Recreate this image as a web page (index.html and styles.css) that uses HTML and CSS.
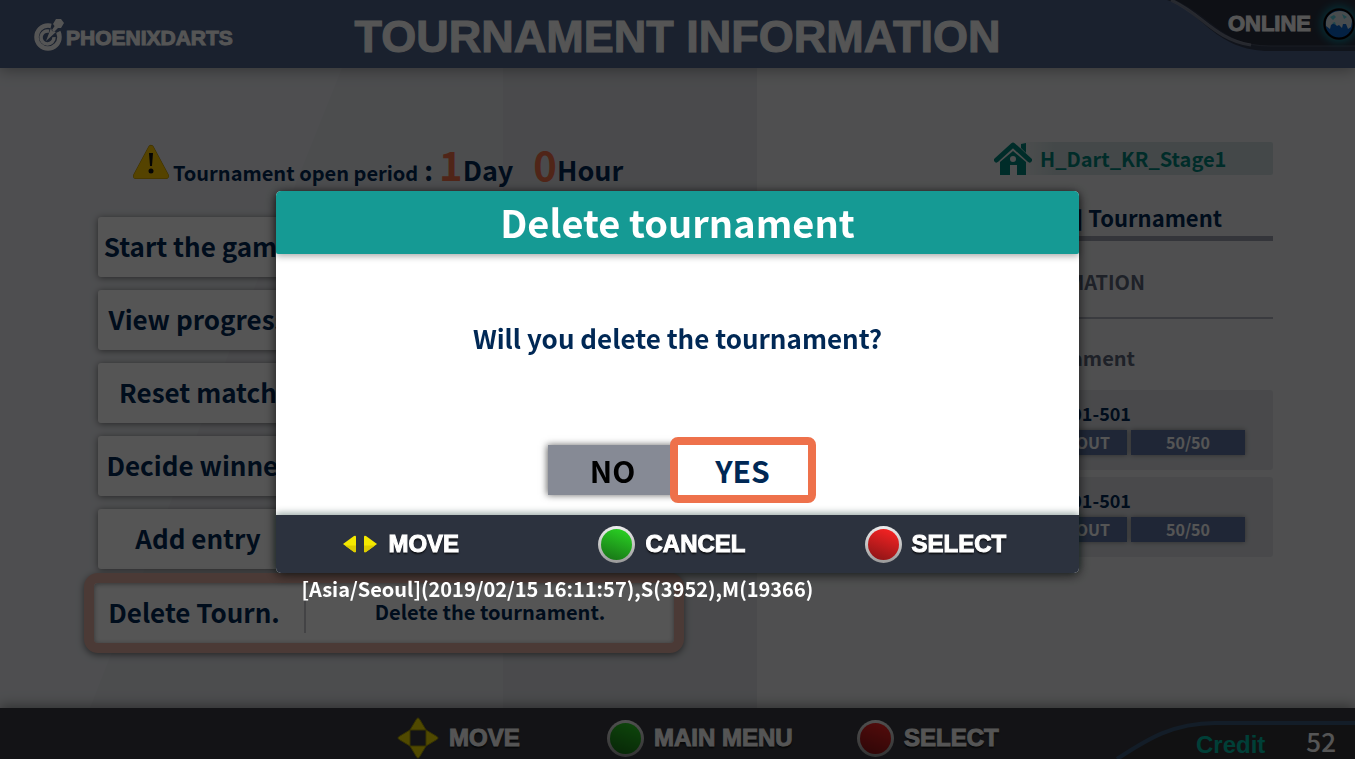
FILE: index.html
```html
<!DOCTYPE html>
<html lang="en">
<head>
  <meta charset="UTF-8" />
  <meta name="viewport" content="width=device-width, initial-scale=1.0" />
  <title>Tournament Information</title>
  <link rel="stylesheet" href="styles.css">
</head>
<body>

  <header class="top-bar">
    <div class="logo">
      <svg width="30" height="34" viewBox="0 0 30 34">
        <circle cx="14" cy="19" r="11.500" fill="none" stroke="#fff" stroke-width="4.500"/>
        <path d="M15 13.200a6.500 6.500 0 1 0 5 6" fill="none" stroke="#fff" stroke-width="3.500"/>
        <path d="M15 17L18 4h10l-2 9-6 3-4 4z" fill="#4e638a"/>
        <path d="M12 23l5-13 1 3 4 1z" fill="#fff"/>
        <path d="M18 12l4-6 3 3-5 5z" fill="#fff"/>
        <path d="M22 1h5l3 4-3 5h-5l-3-4z" fill="#fff"/>
      </svg>
      <span>PHOENIXDARTS</span>
    </div>
    <h1>TOURNAMENT INFORMATION</h1>
    <div class="online">
      <svg class="online-bg" width="190" height="54" viewBox="0 0 190 54">
        <path d="M2 0C38 12 50 51 105 51H190V0z" fill="#333c52"/>
        <path d="M10 0C48 17 58 46 105 46H190V0z" fill="#2b3040"/>
        <path d="M6 0C42 14 54 46 105 46H190" fill="none" stroke="#4c5468" stroke-width="1"/>
        <path d="M6 0C36 13 50 40 86 45" fill="none" stroke="#8f94a3" stroke-width="3" opacity=".7"/>
      </svg>
      <span>ONLINE</span>
      <svg class="globe" width="32" height="32" viewBox="0 0 32 32">
        <circle cx="16" cy="16" r="14.500" fill="#0a63c8" stroke="#000" stroke-width="2"/>
        <path d="M3 14C4 7 10 3 17 3c6 0 11 4 12 10l-1 6-3 2-2-5-3 0-1 4-3-3-2 1-3-3-3 2-1 4-4-3z" fill="#d9e4ea"/>
        <path d="M7 9l4-2 2 2-3 3zM19 6l5 3-3 2zM9 15l3-1 1 3z" fill="#5ad0e0"/>
      </svg>
    </div>
  </header>

  <main>
    <section class="left">
      <svg class="facets" viewBox="0 0 757 640" preserveAspectRatio="none">
        <path d="M0 0H160L205 160 270 420 0 330z" fill="#fff" opacity=".03"/>
        <path d="M342 0H503V640H90L270 180z" fill="#5d5d50" opacity=".03"/>
        <path d="M503 0H757V640H503z" fill="#555" opacity=".08"/>
      </svg>
      <p class="period">
        <svg width="40" height="38" viewBox="0 0 40 38">
          <path d="M20 5L35 33H5z" fill="#ffc800" stroke="#b08a00" stroke-width="6" stroke-linejoin="round"/>
          <path d="M20 5L35 33H5z" fill="#ffc800" stroke="#ffc800" stroke-width="5" stroke-linejoin="round"/>
          <path d="M18 10h4l-1 13h-2z" fill="#111"/>
          <circle cx="20" cy="28" r="2.500" fill="#111"/>
        </svg>
        <span class="period-label">Tournament open period</span>
        <span class="unit colon">:</span>
        <span class="num">1</span><span class="unit">Day</span>
        <span class="num hours">0</span><span class="unit">Hour</span>
      </p>
      <nav class="menu">
        <button><span>Start the game</span></button>
        <button><span>View progress</span></button>
        <button><span>Reset match</span></button>
        <button><span>Decide winner</span></button>
        <button><span>Add entry</span></button>
        <button class="selected"><span>Delete Tourn.</span><small>Delete the tournament.</small></button>
      </nav>
    </section>

    <section class="right">
      <div class="shop">
        <svg width="38" height="33" viewBox="0 0 38 33">
          <path d="M2.500 18L19 3l16.500 15" fill="none" stroke="#00857c" stroke-width="5" stroke-linecap="round" stroke-linejoin="round"/>
          <path d="M27 2l5-1v10l-5-5z" fill="#00857c"/>
          <path fill-rule="evenodd" d="M19 9L32 20v13h-9V23h-7v10H6V20zM19 14a3 3 0 1 0 0 6 3 3 0 0 0 0-6z" fill="#00857c"/>
        </svg>
        <span>H_Dart_KR_Stage1</span>
      </div>
      <h2>] Tournament</h2>
      <h3>INFORMATION</h3>
      <p class="kind">Tournament</p>
      <div class="game">
        <p>501-501</p>
        <div class="tags"><span class="out">OUT</span><span class="count">50/50</span></div>
      </div>
      <div class="game">
        <p>501-501</p>
        <div class="tags"><span class="out">OUT</span><span class="count">50/50</span></div>
      </div>
    </section>
  </main>

  <footer class="bottom-bar">
    <div class="keys">
      <div class="key">
        <svg width="42" height="42" viewBox="0 0 42 42">
          <g fill="#f0dc00" stroke="#a89b00" stroke-width="1" stroke-linejoin="round">
            <path d="M21 1q1 0 2 2l6 10H13l6-10q1-2 2-2z"/>
            <path d="M21 41q1 0 2-2l6-10H13l6 10q1 2 2 2z"/>
            <path d="M1 21q0-1 2-2l10-6v16L3 23q-2-1-2-2z"/>
            <path d="M41 21q0-1-2-2l-10-6v16l10-6q2-1 2-2z"/>
          </g>
        </svg>
        <span>MOVE</span>
      </div>
      <div class="key"><i class="lamp green"></i><span>MAIN MENU</span></div>
      <div class="key"><i class="lamp red"></i><span>SELECT</span></div>
    </div>
    <div class="credit">
      <svg class="credit-bg" width="240" height="38" viewBox="0 0 240 38">
        <path d="M2 38C30 20 56 2 100 2H240V38z" fill="#333438"/>
        <path d="M2 38C30 20 56 2 100 2H240" fill="none" stroke="#3a5878" stroke-width="4"/>
      </svg>
      <span>Credit</span>
      <b>52</b>
    </div>
  </footer>

  <div class="overlay">
    <div class="dialog" role="dialog" aria-labelledby="dialog-title">
      <h2 id="dialog-title">Delete tournament</h2>
      <div class="dialog-body">
        <p>Will you delete the tournament?</p>
        <div class="answers">
          <button class="no">NO</button>
          <button class="yes">YES</button>
        </div>
      </div>
      <div class="dialog-keys">
        <div class="key">
          <svg width="36" height="20" viewBox="0 0 36 20">
            <path d="M1 10L12 2q2-1 2 1v14q0 2-2 1z" fill="#f4e800"/>
            <path d="M35 10L24 2q-2-1-2 1v14q0 2 2 1z" fill="#f4e800"/>
            <path d="M3 11.500h11V17q0 2-2 1zM33 11.500H22V17q0 2 2 1z" fill="#dccb00"/>
          </svg>
          <span>MOVE</span>
        </div>
        <div class="key"><i class="lamp green"></i><span>CANCEL</span></div>
        <div class="key"><i class="lamp red"></i><span>SELECT</span></div>
      </div>
      <div class="stamp">[Asia/Seoul](2019/02/15 16:11:57),S(3952),M(19366)</div>
    </div>
  </div>

</body>
</html>
```

FILE: styles.css
```css
* {
  box-sizing: border-box;
}
html, body {
  margin: 0;
  height: 100%;
  overflow: hidden;
}
body {
  display: flex;
  flex-direction: column;
  background: #ebedf1;
  color: #002855;
  font-family: "Noto Sans CJK KR", "Noto Sans", sans-serif;
  font-weight: bold;
}
h1, h2, h3, p {
  margin: 0;
}
button {
  font: inherit;
  color: inherit;
  border: none;
  padding: 0;
  cursor: pointer;
}

/* top bar */
.top-bar {
  position: relative;
  z-index: 1;
  flex: none;
  display: flex;
  align-items: center;
  justify-content: center;
  height: 68px;
  background: #4e638a;
  box-shadow: 0 2px 14px rgba(0,0,0,0.35);
  color: #fff;
  font-family: "Liberation Sans", Arial, sans-serif;
}
.logo {
  position: absolute;
  left: 34px;
  top: 18px;
  display: flex;
  align-items: center;
  gap: 2px;
  font-size: 21px;
}
.logo span {
  padding-top: 6px;
  -webkit-text-stroke: 1px #fff;
}
h1 {
  padding-top: 6px;
  font-size: 45px;
  line-height: 52px;
  -webkit-text-stroke: 1px #fff;
}
.online {
  position: absolute;
  right: 0;
  top: 0;
  display: flex;
  align-items: center;
  gap: 12px;
  height: 47px;
  font-size: 22px;
}
.online-bg {
  position: absolute;
  right: 0;
  top: 0;
  z-index: -1;
}
.globe {
  border-radius: 50%;
  box-shadow: 0 0 8px 2px #0f8ca0;
}

/* content */
main {
  flex: 1;
  display: grid;
  grid-template-columns: 757fr 598fr;
  min-height: 0;
}
.left {
  position: relative;
  padding: 66px 83px 0 98px;
  background: #e9ebf0;
}
.facets {
  position: absolute;
  inset: 0;
  width: 100%;
  height: 100%;
}
.period {
  position: relative;
  display: flex;
  align-items: baseline;
  height: 60px;
  padding-left: 33px;
  line-height: 60px;
  white-space: nowrap;
}
.period-label {
  padding-left: 2px;
  font-size: 20px;
}
.unit {
  font-size: 27px;
}
.colon {
  margin: 0 6px;
}
.num {
  color: #f0704a;
  font-size: 40px;
}
.hours {
  margin-left: 20px;
}
.menu {
  position: relative;
  display: flex;
  flex-direction: column;
  gap: 13px;
  margin-top: 23px;
}
.menu button {
  display: flex;
  align-items: center;
  height: 60px;
  border-radius: 3px;
  background: #fff;
  box-shadow: 0 1px 7px rgba(0,0,0,0.5);
  font-size: 26px;
}
.menu span {
  width: 200px;
  padding-bottom: 3px;
  text-align: center;
}
.menu .selected {
  height: 80px;
  margin: -9px -10px 0 -14px;
  border: 10px solid #e1aea2;
  border-radius: 14px;
  box-shadow: 0 2px 7px rgba(0,0,0,0.5), inset 0 1px 5px rgba(0,0,0,0.4);
}
.menu .selected span {
  margin-right: 10px;
}
.menu small {
  flex: 1;
  height: 40px;
  border-left: 2px solid #c8cad0;
  font-size: 20px;
  line-height: 38px;
  text-align: center;
}

.right {
  padding: 74px 82px 0 83px;
  background: #edeef0;
}
.shop {
  display: flex;
  align-items: center;
  gap: 8px;
  width: 279px;
  height: 33px;
  margin-left: auto;
  border-radius: 2px;
  background: linear-gradient(to right, transparent 20px, #ccd9db 60px);
  color: #00857c;
  font-size: 20px;
}
.right h2 {
  height: 66px;
  padding: 24px 51px 0 0;
  border-bottom: 5px solid #9b9fad;
  font-size: 22px;
  line-height: 36px;
  text-align: right;
}
.right h3 {
  height: 78px;
  padding: 24px 128px 0 0;
  border-bottom: 2px solid #adb1be;
  color: #5b6478;
  font-size: 20px;
  line-height: 34px;
  text-align: right;
}
.kind {
  height: 71px;
  padding: 22px 138px 0 0;
  color: #5b6478;
  font-size: 20px;
  line-height: 34px;
  text-align: right;
}
.game {
  height: 80px;
  margin-bottom: 7px;
  padding: 10px 28px 0 0;
  border-radius: 3px;
  background: #dadce1;
}
.game p {
  height: 30px;
  padding-right: 114px;
  font-size: 18px;
  line-height: 27px;
  text-align: right;
}
.tags {
  display: flex;
  justify-content: flex-end;
  gap: 4px;
  color: #fff;
  font-size: 16px;
  line-height: 25px;
}
.tags span {
  background: #5d74a2;
  box-shadow: 0 0 5px rgba(0,0,0,0.4);
}
.out {
  width: 115px;
  padding-right: 17px;
  text-align: right;
}
.count {
  width: 114px;
  text-align: center;
}

/* key hints */
.bottom-bar {
  position: relative;
  z-index: 1;
  flex: none;
  height: 51px;
  padding: 9px 0 0 397px;
  background: #393b43;
  box-shadow: 0 -2px 12px rgba(0,0,0,0.4);
}
.keys {
  display: grid;
  grid-template-columns: 210px 250px auto;
}
.key {
  display: flex;
  align-items: center;
  gap: 10px;
  height: 42px;
  color: #fff;
  font-family: "Liberation Sans", Arial, sans-serif;
  font-size: 24px;
  text-shadow: 0 2px 2px rgba(0,0,0,0.8);
}
.key span, .online span {
  -webkit-text-stroke: 1px #fff;
}
.lamp {
  width: 37px;
  height: 37px;
  border: 3px solid transparent;
  border-radius: 50%;
}
.green {
  background: linear-gradient(200deg, #2bd824, #176f16) padding-box, linear-gradient(#eee, #999) border-box;
}
.red {
  background: linear-gradient(200deg, #ff2424, #861416) padding-box, linear-gradient(#eee, #999) border-box;
}
.credit {
  position: absolute;
  right: 0;
  bottom: 0;
  display: flex;
  align-items: center;
  justify-content: flex-end;
  gap: 41px;
  width: 240px;
  height: 37px;
  padding-right: 19px;
  color: #fff;
  font-size: 26px;
}
.credit span {
  padding-top: 9px;
  color: #00bda5;
  font-family: "Liberation Sans", Arial, sans-serif;
  font-size: 24px;
}
.credit b {
  font-weight: 500;
}
.credit-bg {
  position: absolute;
  right: 0;
  bottom: 0;
  z-index: -1;
}

/* dialog */
.overlay {
  position: fixed;
  inset: 0;
  z-index: 10;
  display: flex;
  align-items: center;
  justify-content: center;
  padding-top: 5px;
  background: rgba(0,0,0,0.667);
}
.dialog {
  position: relative;
  width: 59.2%;
  border-radius: 5px;
  background: #fff;
  box-shadow: 0 2px 12px rgba(0,0,0,0.7);
}
.dialog h2 {
  position: relative;
  height: 63px;
  border-radius: 5px 5px 2px 2px;
  background: #159a94;
  box-shadow: 0 2px 7px rgba(0,0,0,0.35);
  color: #fff;
  font-size: 38px;
  line-height: 62px;
  text-align: center;
}
.dialog-body {
  padding: 64px 0 20px;
  font-size: 26px;
  text-align: center;
}
.dialog-body p {
  line-height: 40px;
}
.answers {
  display: flex;
  justify-content: center;
  margin-top: 87px;
  font-size: 30px;
}
.answers button {
  width: 130px;
  height: 50px;
  line-height: 48px;
}
.answers .no {
  background: #868a95;
  box-shadow: -1px 0 7px rgba(0,0,0,0.6);
  color: #000;
}
.answers .yes {
  position: relative;
  width: 146px;
  height: 66px;
  margin: -8px;
  border: 8px solid #ee714b;
  border-radius: 8px;
  background: #fff;
}
.dialog-keys {
  display: grid;
  grid-template-columns: 256fr 266fr 214fr;
  align-items: center;
  height: 58px;
  padding-left: 66px;
  border-radius: 0 0 5px 5px;
  background: #2c323e;
  box-shadow: 0 -2px 7px rgba(0,40,30,0.4);
}
.stamp {
  position: absolute;
  left: 25px;
  top: 100%;
  padding-top: 1px;
  color: #fff;
  font-size: 20px;
  line-height: 30px;
  white-space: nowrap;
}
```
